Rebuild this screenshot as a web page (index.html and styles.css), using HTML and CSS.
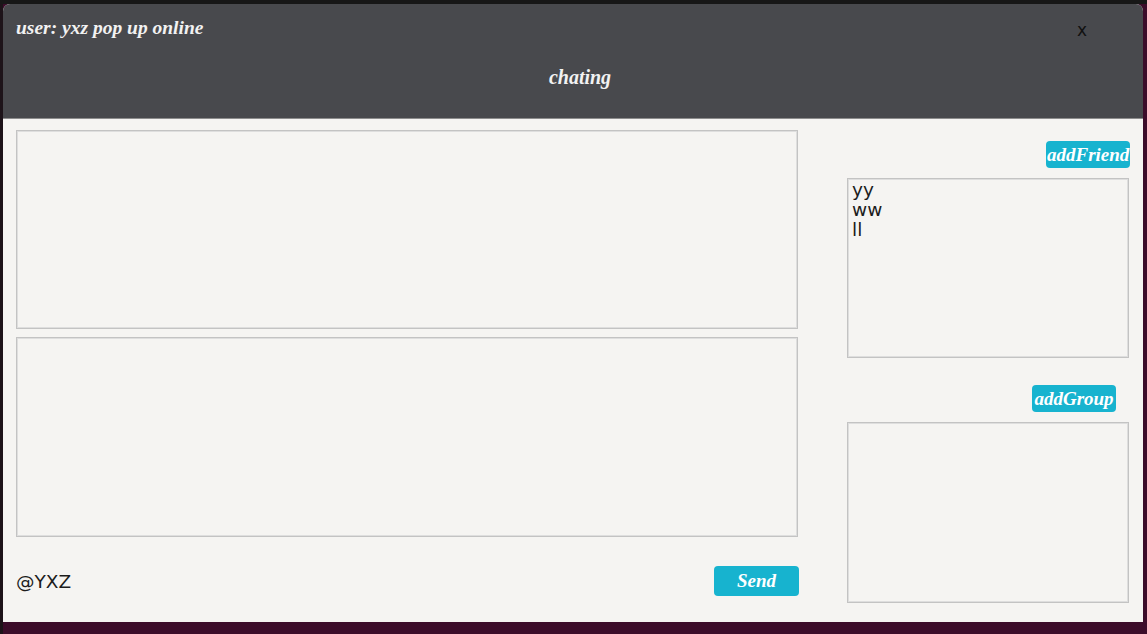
FILE: index.html
```html
<!DOCTYPE html>
<html>
<head>
<meta charset="utf-8">
<link rel="stylesheet" href="styles.css">
</head>
<body>
<div class="desktop">
  <div class="window">
    <header class="header">
      <div class="title-row">
        <span class="title">user: yxz pop up online</span>
        <span class="close">x</span>
      </div>
      <div class="subtitle">chating</div>
    </header>
    <main class="content">
      <section class="chat">
        <div class="pane pane-messages"></div>
        <div class="pane pane-input"></div>
        <div class="chat-footer">
          <span class="handle">@YXZ</span>
          <button class="btn btn-send">Send</button>
        </div>
      </section>
      <aside class="side">
        <button class="btn btn-friend">addFriend</button>
        <ul class="list list-friends">
          <li>yy</li>
          <li>ww</li>
          <li>ll</li>
        </ul>
        <button class="btn btn-group">addGroup</button>
        <ul class="list list-groups"></ul>
      </aside>
    </main>
  </div>
</div>
</body>
</html>
```

FILE: styles.css
```css
html, body {
  margin: 0;
  padding: 0;
}

body {
  width: 1147px;
  height: 634px;
  overflow: hidden;
}

.desktop {
  box-sizing: border-box;
  height: 634px;
  border-top: 4px solid #171717;
  padding-left: 3px;
  background: linear-gradient(to right, #1d1319 3px, #3c0c2a 3px);
}

.window {
  width: 1140px;
  height: 618px;
  background: #f5f4f2;
  border-radius: 7px 7px 0 0;
  overflow: hidden;
  display: flex;
  flex-direction: column;
}

.header {
  height: 115px;
  background: #48494d;
  border-bottom: 1px solid #8d8d8d;
  box-sizing: border-box;
  display: grid;
  grid-template-rows: 46px 54px;
}

.title-row {
  display: flex;
  align-items: center;
  justify-content: space-between;
  padding: 0 56px 0 13px;
}

.title, .subtitle, .btn {
  font-family: "Liberation Serif", "DejaVu Serif", serif;
  font-style: italic;
  font-weight: bold;
}

.title {
  color: #f2f2f2;
  font-size: 19.5px;
  margin-top: 1px;
}

.close {
  font-family: "DejaVu Sans", sans-serif;
  font-size: 17px;
  color: #111;
  margin-top: 5px;
}

.subtitle {
  color: #f2f2f2;
  font-size: 20px;
  text-align: center;
  align-self: center;
  padding-left: 14px;
}

.content {
  flex: 1;
  display: grid;
  grid-template-columns: 782px 282px;
  column-gap: 49px;
  padding: 0 14px 0 13px;
}

.chat {
  display: flex;
  flex-direction: column;
  padding-top: 11px;
}

.pane {
  box-sizing: border-box;
  border: 1px solid #c3c3c3;
  box-shadow: inset 0 0 0 1px #dedede;
}

.pane-messages {
  height: 199px;
}

.pane-input {
  height: 200px;
  margin-top: 8px;
}

.chat-footer {
  display: flex;
  align-items: center;
  justify-content: space-between;
  margin-top: 29px;
  height: 30px;
}

.handle {
  font-family: "DejaVu Sans", sans-serif;
  font-size: 18.5px;
  color: #1c1c1c;
}

.btn {
  border: none;
  background: #17b3cf;
  color: #ffffff;
  font-size: 19px;
  border-radius: 4px;
  padding: 0;
  white-space: nowrap;
  overflow: hidden;
}

.btn-send {
  width: 85px;
  height: 30px;
  text-align: center;
  margin-right: -1px;
}

.side {
  display: flex;
  flex-direction: column;
  align-items: flex-end;
  padding-top: 22px;
}

.btn-friend {
  width: 84px;
  height: 27px;
  text-align: left;
  padding-left: 1px;
  margin-right: -1px;
}

.btn-group {
  width: 84px;
  height: 27px;
  text-align: center;
  margin-top: 27px;
  margin-right: 13px;
}

.list {
  box-sizing: border-box;
  width: 282px;
  margin: 10px 0 0;
  padding: 1px 4px;
  list-style: none;
  border: 1px solid #c3c3c3;
  box-shadow: inset 0 0 0 1px #dedede;
  font-family: "DejaVu Sans", sans-serif;
  font-size: 18.5px;
  line-height: 20px;
  color: #1c1c1c;
}

.list-friends {
  height: 180px;
}

.list-groups {
  height: 181px;
}
```
